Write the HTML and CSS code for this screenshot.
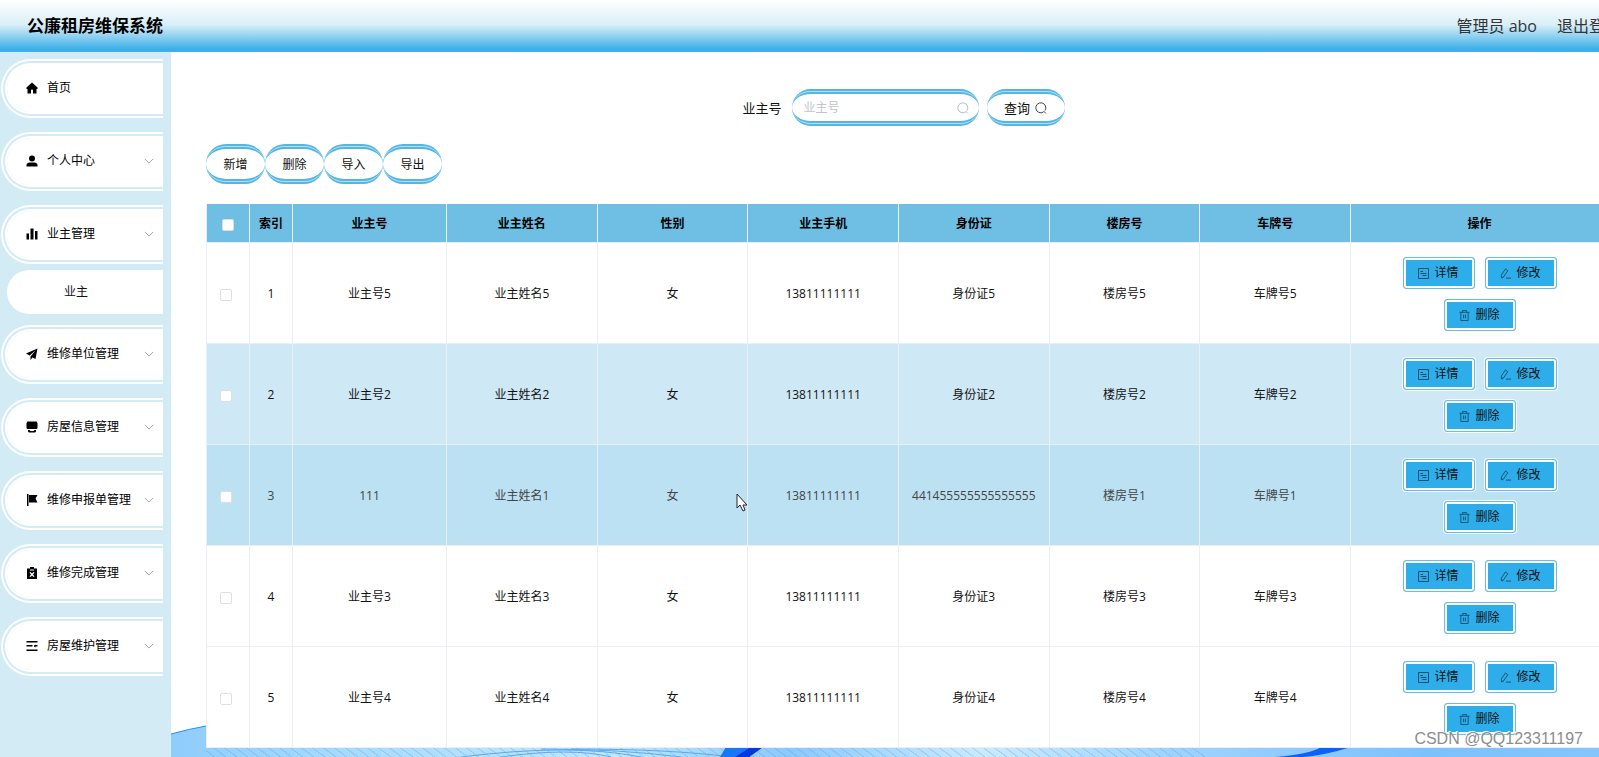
FILE: index.html
```
<!DOCTYPE html>
<html lang="zh-CN">
<head>
<meta charset="utf-8">
<title>公廉租房维保系统</title>
<link rel="stylesheet" href="styles.css">
</head>
<body>
<svg class="defs" width="0" height="0" aria-hidden="true">
  <symbol id="home" viewBox="0 0 24 24"><path d="M12 1 1 11v3h2v9h7v-6a2 2 0 0 1 4 0v6h7v-9h2v-3z"/></symbol>
  <symbol id="user" viewBox="0 0 24 24"><circle cx="12" cy="7" r="6"/><path d="M1 23v-3c0-3 3-5 6-5h10c3 0 6 2 6 5v3z"/></symbol>
  <symbol id="data" viewBox="0 0 24 24"><path d="M1 11h5v12H1zM9 1h6v22H9zM18 6h5v17h-5z"/></symbol>
  <symbol id="send" viewBox="0 0 24 24"><path d="M23 1 0 11l7 4L19 5 9 17v7l4-5 6 3z"/></symbol>
  <symbol id="shop" viewBox="0 0 24 24"><path d="M3 1h18l2 3v9c0 2-1 3-3 3H4c-2 0-3-1-3-3V4zM4 18h3l2 2h6l2-2h3v3l-2 2H6l-2-2z"/></symbol>
  <symbol id="flag" viewBox="0 0 24 24"><path d="M2 0h3v24H2zM6 2h17l-4 7 4 8H6z"/></symbol>
  <symbol id="clip" viewBox="0 0 24 24"><path fill-rule="evenodd" d="M2 3h6V0h8v3h6v21H2zM8 5v2h8V5zm-1 6 3 4-3 4 2 1 3-3 3 3 2-1-3-4 3-4-2-1-3 3-3-3z"/></symbol>
  <symbol id="fold" viewBox="0 0 24 24"><path d="M1 2h22v3H1zM1 10h12v3H1zM16 11l3-2v1h4v3h-4v2l-3-2zM1 19h22v3H1z"/></symbol>
  <symbol id="down" viewBox="0 0 24 24"><path d="m2 7 10 10L22 7" fill="none" stroke="currentColor" stroke-width="2"/></symbol>
  <symbol id="search" viewBox="0 0 24 24"><path d="M17 20a10 10 0 1 1 3-3M17 18l5 5" fill="none" stroke="currentColor" stroke-width="2"/></symbol>
  <symbol id="doc" viewBox="0 0 22 22"><path d="M1 1h20v20H1zM5 7h5M5 11h12M9 15h8" fill="none" stroke="currentColor" stroke-width="2"/></symbol>
  <symbol id="edit" viewBox="0 0 24 24"><path d="M3 21v-6L12 2l5 4L8 19zM3 21h4M13 22h11" fill="none" stroke="currentColor" stroke-width="2"/></symbol>
  <symbol id="trash" viewBox="0 0 24 24"><path d="M1 5h22M4 5v18h16V5M8 5V1h8v4M10 10v8M14 10v8" fill="none" stroke="currentColor" stroke-width="2"/></symbol>
</svg>
<div class="app">
  <header class="header">
    <h1 class="title">公廉租房维保系统</h1>
    <div class="account"><span>管理员 abo</span><a class="logout" href="#">退出登录</a></div>
  </header>
  <div class="body">
    <nav class="sidebar">
      <a class="item" href="#"><svg class="icon"><use href="#home"/></svg>首页</a>
      <a class="item" href="#"><svg class="icon"><use href="#user"/></svg>个人中心<svg class="arrow"><use href="#down"/></svg></a>
      <div class="group">
        <a class="item" href="#"><svg class="icon"><use href="#data"/></svg>业主管理<svg class="arrow"><use href="#down"/></svg></a>
        <a class="subitem" href="#">业主</a>
      </div>
      <a class="item" href="#"><svg class="icon"><use href="#send"/></svg>维修单位管理<svg class="arrow"><use href="#down"/></svg></a>
      <a class="item" href="#"><svg class="icon"><use href="#shop"/></svg>房屋信息管理<svg class="arrow"><use href="#down"/></svg></a>
      <a class="item" href="#"><svg class="icon"><use href="#flag"/></svg>维修申报单管理<svg class="arrow"><use href="#down"/></svg></a>
      <a class="item" href="#"><svg class="icon"><use href="#clip"/></svg>维修完成管理<svg class="arrow"><use href="#down"/></svg></a>
      <a class="item" href="#"><svg class="icon"><use href="#fold"/></svg>房屋维护管理<svg class="arrow"><use href="#down"/></svg></a>
    </nav>
    <main class="main">
      <svg class="waves" viewBox="0 0 1473 40" preserveAspectRatio="none" aria-hidden="true">
        <defs>
          <linearGradient id="sea" x1="0" x2="1" y1="0" y2="0">
            <stop offset="0" stop-color="#8fcdfd"/><stop offset=".12" stop-color="#a9dafd"/><stop offset=".3" stop-color="#c3e7fe"/>
            <stop offset=".42" stop-color="#8cc8fb"/><stop offset=".55" stop-color="#cbeafe"/><stop offset=".68" stop-color="#9fd3fd"/>
            <stop offset=".85" stop-color="#7dc1fc"/><stop offset="1" stop-color="#86c6fc"/>
          </linearGradient>
          <pattern id="mesh" width="11" height="8" patternUnits="userSpaceOnUse"><path d="M0 0 11 8" stroke="#4fa6f0" stroke-opacity=".45" stroke-width="1"/></pattern>
        </defs>
        <path d="M0 17Q18 12 35 9Q150 0 400 0H1473V40H0z" fill="url(#sea)"/>
        <path d="M0 17Q18 12 35 9Q60 6 90 4" fill="none" stroke="#2b8cf0" stroke-width="1"/>
        <path d="M35 30H1020L1040 40H35z" fill="url(#mesh)"/>
        <path d="M290 40Q400 26 470 40M330 40Q400 30 440 40M370 32Q450 32 510 40M400 32Q500 32 560 40" fill="none" stroke="#55aaf2"/>
        <path d="M555 30H592L578 40H549z" fill="#1778f5"/><path d="M580 30H592L578 40H564z" fill="#0636e0"/>
        <path d="M1104 40Q1140 37 1150 30H1180Q1155 38 1132 40z" fill="#0b62f8"/>
      </svg>
      <form class="search">
        <label class="search-label" for="owner">业主号</label>
        <div class="field capsule">
          <input class="field-input" id="owner" type="text" placeholder="业主号">
          <svg class="field-icon"><use href="#search"/></svg>
        </div>
        <button class="query capsule" type="button">查询<svg class="query-icon"><use href="#search"/></svg></button>
      </form>
      <div class="toolbar">
        <button class="tool capsule" type="button">新增</button><button class="tool capsule" type="button">删除</button><button class="tool capsule" type="button">导入</button><button class="tool capsule" type="button">导出</button>
      </div>
      <table class="table">
        <colgroup><col class="col-small"><col class="col-small"><col class="col-owner"><col><col><col><col><col><col><col class="col-actions"></colgroup>
        <thead><tr><th><input class="check" type="checkbox" aria-label="全选"></th><th>索引</th><th>业主号</th><th>业主姓名</th><th>性别</th><th>业主手机</th><th>身份证</th><th>楼房号</th><th>车牌号</th><th>操作</th></tr></thead>
        <tbody id="rows"></tbody>
      </table>
      <svg class="pointer" viewBox="0 0 12 19" aria-hidden="true"><path d="M1 1v14l3-3 3 6 2-1-2-5h4z" fill="#fff" stroke="#223" stroke-width="1"/></svg>
    </main>
  </div>
</div>
<div class="watermark">CSDN @QQ123311197</div>
<script src="rows.js"></script>
</body>
</html>
```
FILE: rows.js
```
const owners = [
  ["业主号5", "业主姓名5", "女", "13811111111", "身份证5", "楼房号5", "车牌号5"],
  ["业主号2", "业主姓名2", "女", "13811111111", "身份证2", "楼房号2", "车牌号2"],
  ["111", "业主姓名1", "女", "13811111111", "441455555555555555", "楼房号1", "车牌号1"],
  ["业主号3", "业主姓名3", "女", "13811111111", "身份证3", "楼房号3", "车牌号3"],
  ["业主号4", "业主姓名4", "女", "13811111111", "身份证4", "楼房号4", "车牌号4"]
];
const rowClass = { 1: "striped", 2: "active" };
const action = (icon, text) =>
  `<button class="action" type="button"><svg class="action-icon"><use href="#${icon}"/></svg>${text}</button>`;

document.getElementById("rows").innerHTML = owners.map((cells, i) => `
  <tr class="${rowClass[i] || ""}">
    <td><input class="check" type="checkbox" aria-label="选择第${i + 1}行"></td>
    <td>${i + 1}</td>${cells.map(c => `<td>${c}</td>`).join("")}
    <td><div class="actions">${action("doc", "详情")}${action("edit", "修改")}${action("trash", "删除")}</div></td>
  </tr>`).join("");
```
FILE: styles.css
```
* { box-sizing: border-box; }
body {
  margin: 0;
  overflow: hidden;
  background: #fff;
  color: #111;
  font: 12px/16px "Open Sans", "Noto Sans CJK SC", sans-serif;
}
button, input { font: inherit; color: inherit; }
a { color: inherit; text-decoration: none; }
svg { fill: currentColor; flex: none; }
.defs { position: absolute; }

/* The page is wider than the window; the right edge runs off screen. */
.app {
  width: calc(100% + 45px);
  min-height: 100vh;
  display: flex;
  flex-direction: column;
}
.header {
  height: 52px;
  padding: 0 23px 0 27px;
  display: flex;
  align-items: center;
  justify-content: space-between;
  background: linear-gradient(#fff 0%, #d9eef7 48%, #3aafea 95%, #45b0e4 100%);
}
.title { margin: 0; font-size: 17px; line-height: 24px; color: #000; }
.account { display: flex; gap: 20px; font-size: 16px; line-height: 24px; color: #333; }
.body { flex: 1; display: flex; }

.sidebar {
  width: 171px;
  flex: none;
  padding: 7px 8px 0 1px;
  display: flex;
  flex-direction: column;
  gap: 14px;
  background: #d3ebf5;
}
.item {
  height: 59px;
  padding: 0 9px 2px 19px;
  display: flex;
  align-items: center;
  border: 6px double #fff;
  border-right: 0;
  border-radius: 30px 0 0 30px;
  background: #fff padding-box;
  color: #000;
}
.icon { width: 12px; height: 12px; margin-right: 9px; }
.arrow { width: 10px; height: 10px; margin-left: auto; color: #909399; }
.group { display: flex; flex-direction: column; gap: 6px; margin-bottom: -3px; }
.subitem {
  height: 44px;
  margin-left: 6px;
  padding-left: 57px;
  display: flex;
  align-items: center;
  border-radius: 22px 0 0 22px;
  background: #fff;
}

.main {
  flex: 1;
  min-width: 0;
  position: relative;
  padding: 37px 35px 0;
}
.waves { position: absolute; left: 0; bottom: 0; width: 100%; height: 40px; }
.capsule {
  border: 0 solid #55b6e6;
  border-width: 5px 0;
  border-style: double none;
  border-radius: 20px;
  background: linear-gradient(#fff, #fff) padding-box, #b4e1f7 border-box;
}
.search {
  display: flex;
  align-items: center;
  justify-content: center;
  padding-right: 8px;
}
.search-label { margin-right: 10px; font-size: 13px; }
.field {
  width: 187px;
  height: 37px;
  margin-right: 8px;
  padding: 0 10px 0 12px;
  display: flex;
  align-items: center;
}
.field-input { flex: 1; min-width: 0; padding: 0; border: 0; outline: 0; background: none; }
.field-input::placeholder { color: #c0c4cc; }
.field-icon { width: 12px; height: 12px; color: #b8bcc4; }
.query {
  width: 78px;
  height: 37px;
  padding: 0;
  display: flex;
  align-items: center;
  justify-content: center;
  gap: 5px;
  font-size: 13px;
}
.query-icon { width: 12px; height: 12px; color: #444; }
.toolbar { display: flex; margin: 18px 0 20px; }
.tool { width: 59px; height: 40px; padding: 2px 0 0; }

.table {
  position: relative;
  width: 100%;
  table-layout: fixed;
  border-spacing: 0;
  border-left: 1px solid #ebeef5;
  background: #fff;
  text-align: center;
}
.col-small { width: 43px; }
.col-owner { width: 154px; }
.col-actions { width: 258px; }
.table th, .table td {
  padding: 2px 0 0;
  border: 0 solid #ebeef5;
  border-width: 0 1px 1px 0;
}
.table th { height: 39px; background: #6fbee3; color: #000; }
.table td { height: 101px; }
.striped { background: #cfe8f6; }
.active { background: #bbe1f3; color: #444; }
.check {
  appearance: none;
  width: 12px;
  height: 12px;
  margin: 0;
  border: 1px solid #dcdfe6;
  border-radius: 2px;
  background: #fff;
  vertical-align: middle;
}
td .check { margin-right: 4px; }
.actions {
  display: flex;
  flex-wrap: wrap;
  justify-content: center;
  gap: 10px;
  padding: 0 50px;
}
.action {
  width: 72px;
  height: 32px;
  padding: 0;
  display: flex;
  align-items: center;
  justify-content: center;
  gap: 5px;
  border: 1px solid #67bdea;
  border-radius: 3px;
  background: #2daeea;
  box-shadow: inset 0 0 0 2px #fff, 0 0 0 1px rgba(255, 255, 255, .8);
  color: #111;
}
.action-icon { width: 11px; height: 11px; color: #14506f; }

.pointer { position: absolute; left: 565px; top: 441px; width: 12px; height: 19px; }
.watermark {
  position: absolute;
  right: 16px;
  bottom: 8px;
  font: 16px/20px "Liberation Sans", Arial, sans-serif;
  color: #8d8d8d;
  text-shadow: -1px -1px 0 #fff;
}
```
